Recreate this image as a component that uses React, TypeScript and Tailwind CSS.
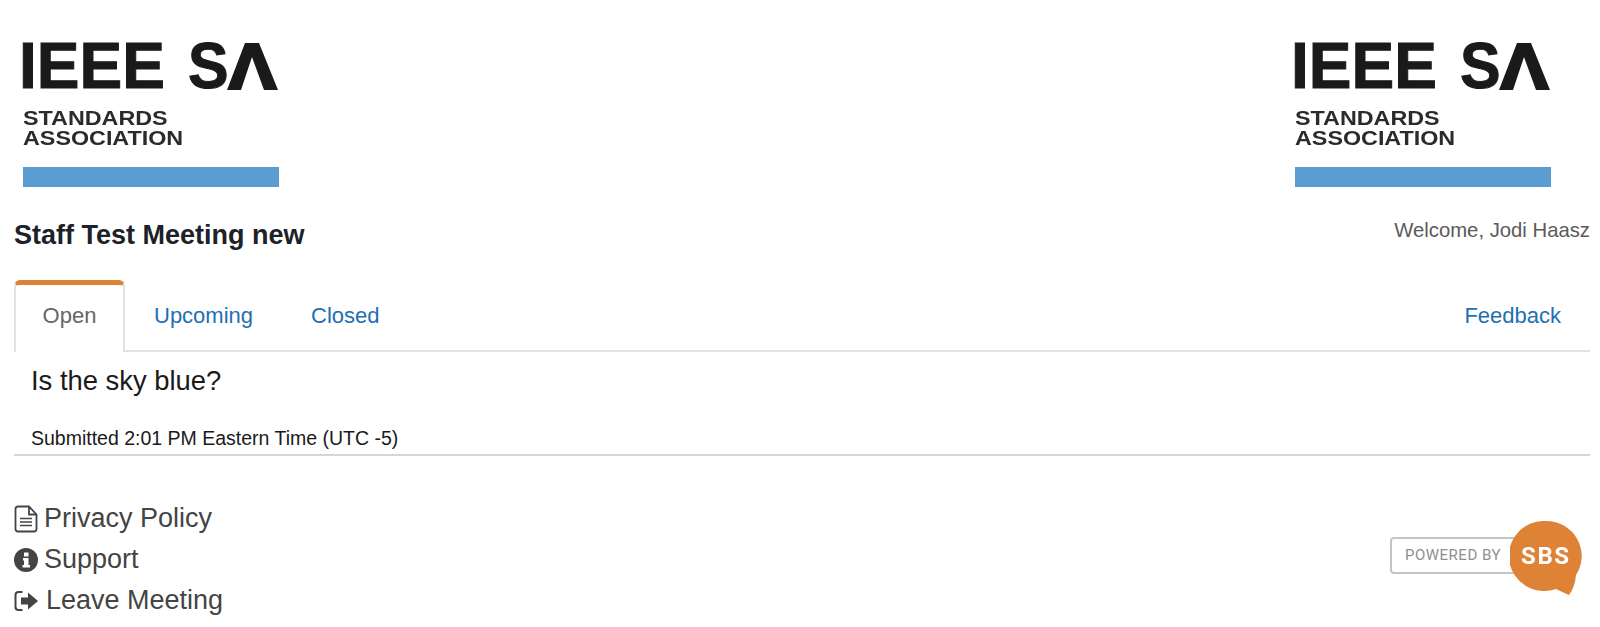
const SANS = "font-['Liberation_Sans',Arial,sans-serif]";

const Logo = () => (
  <div className="w-[256px] flex flex-col blur-[0.4px]">
    <div className="h-[47px] flex text-[#1a1a1a] font-bold text-[64px] leading-[47px] whitespace-nowrap">
      <span className="w-[169px] -ml-[4px] [-webkit-text-stroke:1px_#1a1a1a]">IEEE</span>
      <span className="w-[39px] scale-x-[0.95] origin-left [-webkit-text-stroke:1px_#1a1a1a]">S</span>
      <svg width="51" height="47" viewBox="0 0 51 47" className="shrink-0">
        <path d="M0 47 L18 0 H32 L51 47 H37 L25 14 L14 47 Z" fill="#1a1a1a" />
      </svg>
    </div>
    <div className="mt-[18px] text-[#2b2b2b] font-bold text-[21px] leading-[20px] scale-x-[1.11] origin-left whitespace-nowrap">
      STANDARDS
      <br />
      ASSOCIATION
    </div>
    <div className="mt-[19px] h-[20px] w-full bg-[#5b9dd0]" />
  </div>
);

const FileIcon = () => (
  <svg width="24" height="28" viewBox="0 0 24 28" fill="none" stroke="#444" strokeWidth="1.8">
    <path d="M1.5 4 Q1.5 1.5 4 1.5 H15 L22.5 9.5 V24 Q22.5 26.5 20 26.5 H4 Q1.5 26.5 1.5 24 Z" />
    <path d="M15 1.5 V9.5 H22.5" />
    <path d="M6 13.5 H18 M6 17 H18 M6 20.5 H18" strokeWidth="1.6" />
  </svg>
);

const InfoIcon = () => (
  <svg width="24" height="24" viewBox="0 0 24 24">
    <circle cx="12" cy="12" r="12" fill="#444" />
    <path d="M9 10 H14.5 V17 H16 V19.5 H8.5 V17 H10 V12.5 H9 Z M10 4.5 H14.5 V8.5 H10 Z" fill="#fff" />
  </svg>
);

const LeaveIcon = () => (
  <svg width="25" height="22" viewBox="0 0 25 22" fill="none">
    <path d="M8.5 2 H4.5 Q1.5 2 1.5 5 V17 Q1.5 20 4.5 20 H8.5" stroke="#444" strokeWidth="2" />
    <path d="M7 7.5 H14 V2.5 L24 11 L14 19.5 V14.5 H7 Z" fill="#444" />
  </svg>
);

const PoweredBy = () => (
  <div className="relative w-[192px] h-[76px] blur-[0.5px]">
    <div className="absolute left-0 top-[16px] w-[130px] h-[37px] rounded-[4px] border-2 border-[#c4c4c4] bg-white flex items-center pl-[13px] text-[#8f8f8f] text-[15px] tracking-[0.5px] font-['Roboto',sans-serif] whitespace-nowrap">
      POWERED BY
    </div>
    <svg width="72" height="76" viewBox="0 0 72 76" className="absolute left-[120px] top-0">
      <path d="M36 0 A35.5 35 0 0 1 66 54 Q65 66 59 74 Q52 71 46 68 A35.5 35 0 1 1 36 0 Z" fill="#de8336" />
    </svg>
    <span className="absolute left-[131px] top-[22px] text-white font-bold text-[24px] leading-[26px] tracking-[1.6px] font-['Roboto',sans-serif]">
      SBS
    </span>
  </div>
);

export default function App() {
  return (
    <div className={`min-h-[627px] bg-white ${SANS} pl-[14px] pr-[10px] pt-[43px]`}>
      <div className="flex justify-between pl-[9px] pr-[39px]">
        <Logo />
        <Logo />
      </div>

      <div className="flex justify-between items-start mt-[30px]">
        <h1 className="text-[27px] leading-[30px] font-bold text-[#1d2129] mt-[3px]">Staff Test Meeting new</h1>
        <span className="text-[20.3px] leading-[26px] text-[#5a5a5a]">Welcome, Jodi Haasz</span>
      </div>

      <div className="mt-[30px] flex items-end h-[72px] border-b-2 border-[#dfe3e8] text-[22px]">
        <div className="w-[111px] h-[72px] -mb-[2px] bg-white rounded-t-[6px] border-x-2 border-[#dfe3e8] border-t-[5px] border-t-[#de8336] flex items-center justify-center text-[#666] pb-[7px]">
          Open
        </div>
        <a className="ml-[29px] h-[70px] flex items-center text-[#1f6fb2]">Upcoming</a>
        <a className="ml-[58px] h-[70px] flex items-center text-[#1f6fb2]">Closed</a>
        <a className="ml-auto mr-[29px] h-[70px] flex items-center text-[#1f6fb2]">Feedback</a>
      </div>

      <div className="border-b-2 border-[#d6d6d6] pl-[17px] pb-[4px]">
        <p className="text-[27.4px] leading-[30px] text-[#1a1a1a] mt-[14px]">Is the sky blue?</p>
        <p className="text-[19.5px] leading-[24px] text-[#1a1a1a] mt-[30px]">Submitted 2:01 PM Eastern Time (UTC -5)</p>
      </div>

      <div className="flex justify-between items-start mt-[42px]">
        <div className="flex flex-col text-[27px] text-[#444] leading-[41px]">
          <div className="flex items-center gap-[6px]"><FileIcon /><span>Privacy Policy</span></div>
          <div className="flex items-center gap-[6px]"><InfoIcon /><span>Support</span></div>
          <div className="flex items-center gap-[7px]"><LeaveIcon /><span>Leave Meeting</span></div>
        </div>
        <div className="mt-[23px] mr-[8px]"><PoweredBy /></div>
      </div>
    </div>
  );
}
